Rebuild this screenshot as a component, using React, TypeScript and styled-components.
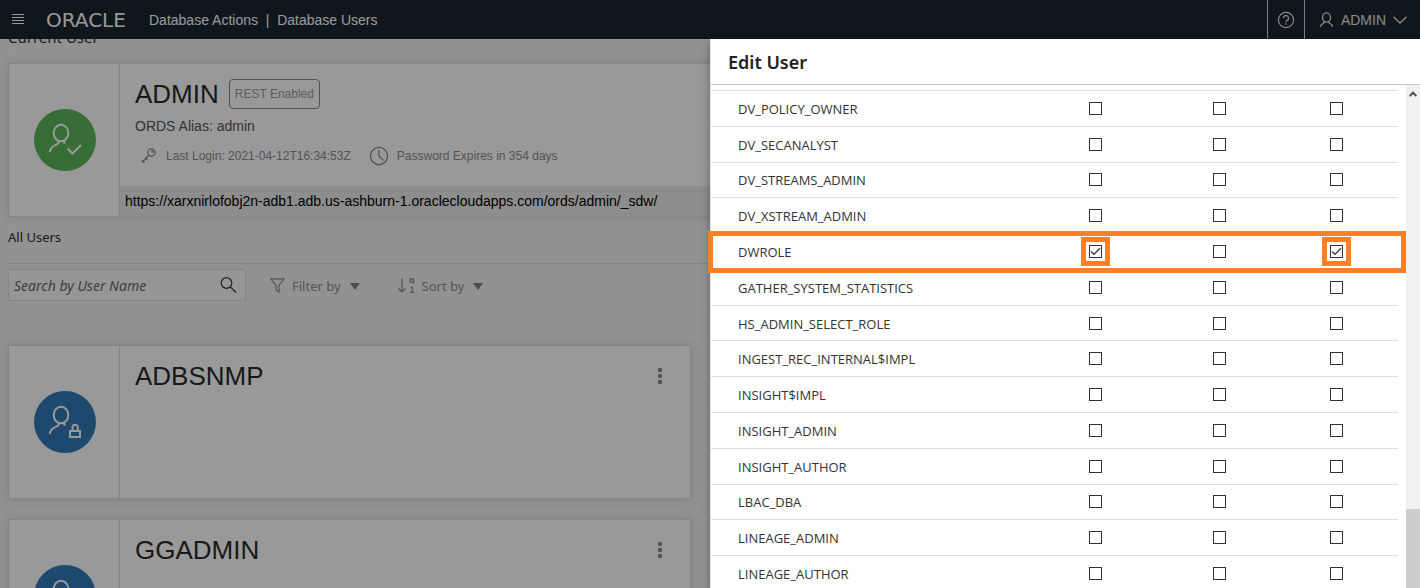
import React from "react";
import styled, { createGlobalStyle } from "styled-components";

const ui = `"Noto Sans", "Open Sans", sans-serif`;
const sans = `"Liberation Sans", Arial, sans-serif`;
const highlight = "#ff7f27";

const GlobalStyle = createGlobalStyle`
  * { box-sizing: border-box; }
  body { margin: 0; font-family: ${ui}; font-size: 13px; color: #333; background: #f3f3f3; }
  h1, h2, h3, p { margin: 0; font-weight: 400; }
  button { border: 0; padding: 0; background: none; color: inherit; font: inherit; }
`;

const Page = styled.div`
  position: relative;
  display: flex;
  flex-direction: column;
  height: 100vh;
  overflow: hidden;
`;

const TopBar = styled.header`
  position: relative;
  z-index: 1;
  flex: none;
  display: flex;
  align-items: center;
  height: 39px;
  padding-left: 12px;
  background: #1a2530;
  color: #fff;
  font: 14px ${sans};
`;

const MenuButton = styled.button`
  display: flex;
  margin-right: 21px;
`;

const Logo = styled.span`
  width: 91px;
  margin-right: 12px;
  font: 20px "DejaVu Sans", sans-serif;
`;

const Crumb = styled.span`
  flex: 1;
  white-space: pre;
`;

const BarButton = styled.button<{ $wide?: boolean }>`
  display: flex;
  align-items: center;
  gap: 7px;
  height: 100%;
  padding: ${(p) => (p.$wide ? "0 13px 0 14px" : "0 9px")};
  border-left: 1px solid #d0d0d0;
  color: #e4e4e4;
`;

const Content = styled.main`
  flex: 1;
  padding: 0 8px;
`;

const CurrentTitle = styled.h2`
  margin: -14px 0 14px;
  font-size: 15px;
  line-height: 24px;
`;

const Card = styled.article`
  display: flex;
  height: 154px;
  border: 1px solid #dcdcdc;
  background: #fff;
  box-shadow: 0 0 10px rgba(0, 0, 0, 0.12);
`;

const CardSide = styled.div`
  display: flex;
  align-items: center;
  justify-content: flex-end;
  width: 111px;
  padding-right: 23px;
  border-right: 1px solid #dcdcdc;
`;

const Avatar = styled.div<{ $locked?: boolean }>`
  display: flex;
  width: 62px;
  height: 62px;
  border-radius: 50%;
  background: ${(p) => (p.$locked ? "#337ab7" : "#5cb85c")};
`;

const CardMain = styled.div`
  flex: 1;
  display: flex;
  flex-direction: column;
  font-family: ${sans};
`;

const CardHead = styled.div`
  display: flex;
  align-items: center;
  justify-content: space-between;
  padding: 15px 26px 0 15px;
`;

const NameGroup = styled.div`
  display: flex;
  align-items: center;
  gap: 10px;
`;

const UserName = styled.h3`
  font-size: 26px;
  line-height: 30px;
  color: #2b2b2b;
`;

const Badge = styled.span`
  padding: 0 5px;
  border: 1px solid #8a8a8a;
  border-radius: 4px;
  font-size: 12px;
  line-height: 28px;
  color: #9c9c9c;
`;

const Alias = styled.p`
  padding: 8px 15px 0;
  font-size: 14px;
  line-height: 18px;
  color: #555;
`;

const Facts = styled.div`
  display: flex;
  align-items: center;
  gap: 18px;
  padding: 11px 19px 0;
  font-size: 12px;
  line-height: 20px;
  color: #8c8c8c;
`;

const Fact = styled.span`
  display: flex;
  align-items: center;
  gap: 8px;
`;

const UrlStrip = styled.a`
  display: block;
  margin-top: auto;
  padding: 0 5px;
  background: #ebebeb;
  font-size: 14px;
  line-height: 30px;
  color: #000;
  text-decoration: none;
`;

const SectionTitle = styled.h2`
  padding: 10px 0 16px;
  border-bottom: 1px solid #dadada;
  font-size: 13px;
  line-height: 20px;
  color: #2b2b2b;
`;

const Tools = styled.div`
  display: flex;
  align-items: center;
  margin: 5px 0 44px;
  color: #8c8c8c;
`;

const Search = styled.label`
  display: flex;
  align-items: center;
  width: 238px;
  height: 32px;
  margin-right: 24px;
  padding: 0 8px 0 5px;
  border: 1px solid #dedede;
  border-radius: 2px;
  background: #fafafa;
  color: #333;
`;

const SearchInput = styled.input`
  flex: 1;
  min-width: 0;
  padding: 1px 0 0;
  border: 0;
  outline: 0;
  background: none;
  font: italic 14px ${ui};
  &::placeholder { color: #6a6a6a; opacity: 1; }
`;

const ToolButton = styled.button`
  display: flex;
  align-items: center;
  gap: 7px;
  margin-right: 38px;
  padding-top: 2px;
`;

const UserList = styled.section`
  display: flex;
  flex-direction: column;
  gap: 20px;
  width: calc(50% - 19px);
`;

const Backdrop = styled.div`
  position: absolute;
  z-index: 2;
  inset: 0;
  background: rgba(0, 0, 0, 0.4);
`;

const Drawer = styled.aside`
  position: absolute;
  z-index: 3;
  top: 39px;
  right: 0;
  bottom: 0;
  display: flex;
  flex-direction: column;
  width: 50%;
  border-left: 1px solid #e6e6e6;
  background: #fff;
  box-shadow: 0 4px 8px rgba(0, 0, 0, 0.35);
`;

const DrawerTitle = styled.h1`
  padding: 1px 17px 0;
  border-bottom: 1px solid #c8c8c8;
  font-size: 18px;
  font-weight: 600;
  line-height: 44px;
  color: #222;
`;

const DrawerBody = styled.div`
  flex: 1;
  display: flex;
  min-height: 0;
  margin-left: -3px;
`;

const RoleArea = styled.div`
  flex: 1;
  overflow: hidden;
  padding: 5px 8px 0 3px;
`;

const RoleTable = styled.table`
  width: 100%;
  height: 502px;
  table-layout: fixed;
  border-spacing: 0;
  border-top: 1px solid #dfdfdf;
`;

const RoleRow = styled.tr`
  position: relative;
`;

const RoleName = styled.th`
  padding: 1px 0 0 27px;
  border-bottom: 1px solid #dfdfdf;
  font-family: "Open Sans", sans-serif;
  font-weight: 400;
  line-height: 18px;
  text-align: left;
`;

const CheckCell = styled.td<{ $last?: boolean }>`
  width: ${(p) => (p.$last ? "17%" : "18%")};
  padding: 0 ${(p) => (p.$last ? "6px" : "0")} 0 0;
  border-bottom: 1px solid #dfdfdf;
`;

const CheckLabel = styled.label`
  position: relative;
  display: block;
  width: 13px;
  height: 13px;
  margin: 0 auto;
`;

const CheckInput = styled.input`
  appearance: none;
  display: block;
  width: 13px;
  height: 13px;
  margin: 0;
  border: 1px solid #333;
  background: #fff;
`;

const CheckMark = styled.svg`
  position: absolute;
  inset: 0;
  pointer-events: none;
`;

const Marker = styled.span<{ $row?: boolean }>`
  position: absolute;
  inset: ${(p) => (p.$row ? "-3px -8px -3px -3px" : "-8px")};
  border: 5px solid ${highlight};
  pointer-events: none;
`;

const ScrollTrack = styled.div`
  display: flex;
  flex-direction: column;
  justify-content: space-between;
  width: 14px;
  background: #f0f0f0;
`;

const ScrollUp = styled.button`
  display: flex;
  justify-content: center;
  padding-top: 6px;
`;

const ScrollThumb = styled.div`
  height: 79px;
  background: #cdcdcd;
`;

const PersonIcon = ({ locked }: { locked?: boolean }) => (
  <svg width="62" height="62" viewBox="0 0 62 62" fill="none" stroke="#fff" strokeWidth="2" aria-hidden="true">
    <ellipse cx="27" cy="24" rx="7.3" ry="8.2" />
    <path d="M24.5 32v2.2c-2 2.6-8.500 1.800-8.500 8.800M30.500 31.500v3.200" />
    {locked ? (
      <path d="M36 40h10v6H36zM38.500 39.500v-3a2.600 2.800 0 0 1 5.200 0v3" />
    ) : (
      <path d="M33.500 39.500l5 5 8.500-8.500" />
    )}
  </svg>
);

const KeyIcon = () => (
  <svg width="19" height="18" viewBox="0 0 19 18" fill="none" stroke="currentColor" strokeWidth="1.3" aria-hidden="true">
    <circle cx="12.500" cy="5.500" r="3.600" />
    <circle cx="13.500" cy="4.500" r="0.600" />
    <path d="M10 8L3 15.500M3 13l2.500 2.500M6 10.500l2.500 2.500" />
  </svg>
);

const ClockIcon = () => (
  <svg width="20" height="20" viewBox="0 0 20 20" fill="none" stroke="currentColor" strokeWidth="1.3" aria-hidden="true">
    <circle cx="10" cy="10" r="8.600" />
    <path d="M10 4v6l4.500 4.500" />
  </svg>
);

const MoreIcon = () => (
  <svg width="8" height="20" viewBox="0 0 8 20" fill="#8c8c8c" aria-hidden="true">
    <circle cx="4" cy="5" r="2.200" />
    <circle cx="4" cy="11" r="2.200" />
    <circle cx="4" cy="17" r="2.200" />
  </svg>
);

const Caret = () => (
  <svg width="12" height="7" viewBox="0 0 12 7" fill="#808080" aria-hidden="true">
    <path d="M2 0h10L7 7z" />
  </svg>
);

const roles = [
  "DV_POLICY_OWNER",
  "DV_SECANALYST",
  "DV_STREAMS_ADMIN",
  "DV_XSTREAM_ADMIN",
  "DWROLE",
  "GATHER_SYSTEM_STATISTICS",
  "HS_ADMIN_SELECT_ROLE",
  "INGEST_REC_INTERNAL$IMPL",
  "INSIGHT$IMPL",
  "INSIGHT_ADMIN",
  "INSIGHT_AUTHOR",
  "LBAC_DBA",
  "LINEAGE_ADMIN",
  "LINEAGE_AUTHOR",
];
const options = ["Granted", "Admin", "Default"];

const RoleCheck = ({ label, checked }: { label: string; checked: boolean }) => (
  <CheckLabel>
    <CheckInput type="checkbox" defaultChecked={checked} aria-label={label} />
    {checked && (
      <>
        <CheckMark width="13" height="13" viewBox="0 0 13 13" fill="none" stroke="#444" strokeWidth="1.500">
          <path d="M2 6.500L5 9.300L11 3.300" />
        </CheckMark>
        <Marker />
      </>
    )}
  </CheckLabel>
);

export default function App() {
  return (
    <Page>
      <GlobalStyle />
      <TopBar>
        <MenuButton aria-label="Menu">
          <svg width="13" height="14" viewBox="0 0 13 14" stroke="#fff" strokeWidth="1">
            <path d="M0 1.500h12M0 4.500h12M0 7.500h12M0 10.500h12" />
          </svg>
        </MenuButton>
        <Logo>ORACLE</Logo>
        <Crumb>{"Database Actions  |  Database Users"}</Crumb>
        <BarButton aria-label="Help">
          <svg width="18" height="18" viewBox="0 0 18 18" fill="none" stroke="currentColor" strokeWidth="1.200">
            <circle cx="9" cy="9" r="7.600" />
            <path d="M6.500 7.200a2.500 2.500 0 1 1 3.600 2.200q-1.100.6-1.100 1.800M9 12.300v1.400" />
          </svg>
        </BarButton>
        <BarButton $wide>
          <svg width="15" height="16" viewBox="0 0 15 16" fill="none" stroke="currentColor" strokeWidth="1.300">
            <ellipse cx="7.500" cy="5.500" rx="4" ry="4.600" />
            <path d="M5.500 9.800Q5 11.300 3.500 11.800Q1.500 12.500 1.500 15M9.500 9.800Q10 11.300 11.500 11.800Q13.500 12.500 13.500 15" />
          </svg>
          ADMIN
          <svg width="14" height="8" viewBox="0 0 14 8" fill="none" stroke="currentColor" strokeWidth="1.300">
            <path d="M.5 .8L7 7L13.500 .8" />
          </svg>
        </BarButton>
      </TopBar>

      <Content>
        <CurrentTitle>Current User</CurrentTitle>
        <Card>
          <CardSide>
            <Avatar>
              <PersonIcon />
            </Avatar>
          </CardSide>
          <CardMain>
            <CardHead>
              <NameGroup>
                <UserName>ADMIN</UserName>
                <Badge>REST Enabled</Badge>
              </NameGroup>
            </CardHead>
            <Alias>ORDS Alias: admin</Alias>
            <Facts>
              <Fact>
                <KeyIcon />
                Last Login: 2021-04-12T16:34:53Z
              </Fact>
              <Fact>
                <ClockIcon />
                Password Expires in 354 days
              </Fact>
            </Facts>
            <UrlStrip href="https://xarxnirlofobj2n-adb1.adb.us-ashburn-1.oraclecloudapps.com/ords/admin/_sdw/">
              https://xarxnirlofobj2n-adb1.adb.us-ashburn-1.oraclecloudapps.com/ords/admin/_sdw/
            </UrlStrip>
          </CardMain>
        </Card>

        <SectionTitle>All Users</SectionTitle>
        <Tools>
          <Search>
            <SearchInput type="search" placeholder="Search by User Name" aria-label="Search by User Name" />
            <svg width="17" height="17" viewBox="0 0 17 17" fill="none" stroke="currentColor" strokeWidth="1.200">
              <circle cx="6.500" cy="6" r="5.300" />
              <path d="M10.300 9.800L16 15.500" />
            </svg>
          </Search>
          <ToolButton>
            <svg width="15" height="16" viewBox="0 0 15 16" fill="none" stroke="currentColor" strokeWidth="1.200">
              <path d="M.8 .8h13.400L9 7.500v6.500L6 12V7.500z" />
            </svg>
            Filter by
            <Caret />
          </ToolButton>
          <ToolButton>
            <svg width="17" height="16" viewBox="0 0 17 16" fill="none" stroke="currentColor" strokeWidth="1.200">
              <path d="M4 .5v13.500M.6 10.500L4 14L7.400 10.500M15.500 6V.8h-3.500v3h3.500M12.500 9h1.800v5.500M12 14.300h4.200" />
            </svg>
            Sort by
            <Caret />
          </ToolButton>
        </Tools>

        <UserList>
          {["ADBSNMP", "GGADMIN"].map((name) => (
            <Card key={name}>
              <CardSide>
                <Avatar $locked>
                  <PersonIcon locked />
                </Avatar>
              </CardSide>
              <CardMain>
                <CardHead>
                  <UserName>{name}</UserName>
                  <button aria-label={`Actions for ${name}`}>
                    <MoreIcon />
                  </button>
                </CardHead>
              </CardMain>
            </Card>
          ))}
        </UserList>
      </Content>

      <Backdrop />

      <Drawer>
        <DrawerTitle>Edit User</DrawerTitle>
        <DrawerBody>
          <RoleArea>
            <RoleTable>
              <tbody>
                {roles.map((role) => (
                  <RoleRow key={role}>
                    <RoleName scope="row">
                      {role}
                      {role === "DWROLE" && <Marker $row />}
                    </RoleName>
                    {options.map((option, i) => (
                      <CheckCell key={option} $last={i === 2}>
                        <RoleCheck label={`${role} ${option}`} checked={role === "DWROLE" && i !== 1} />
                      </CheckCell>
                    ))}
                  </RoleRow>
                ))}
              </tbody>
            </RoleTable>
          </RoleArea>
          <ScrollTrack>
            <ScrollUp aria-label="Scroll up">
              <svg width="8" height="6" viewBox="0 0 8 6" fill="none" stroke="#505050" strokeWidth="2">
                <path d="M.7 5L4 1.700L7.300 5" />
              </svg>
            </ScrollUp>
            <ScrollThumb />
          </ScrollTrack>
        </DrawerBody>
      </Drawer>
    </Page>
  );
}
